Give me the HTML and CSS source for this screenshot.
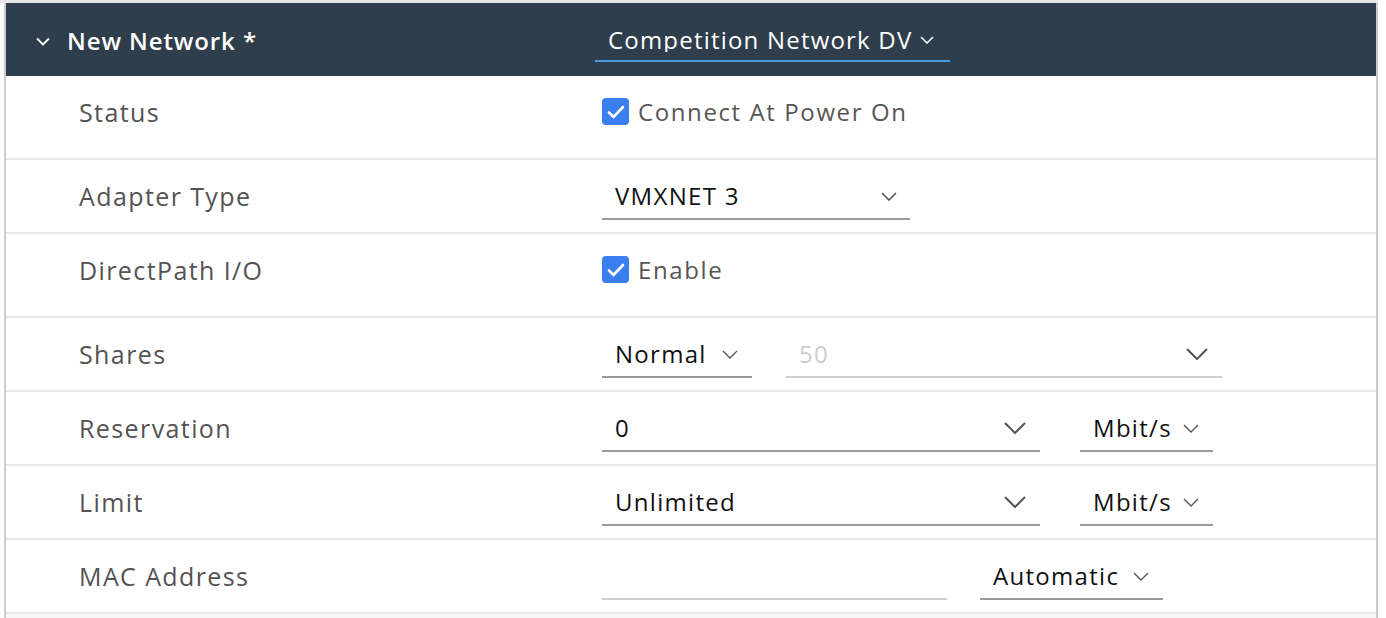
FILE: index.html
```html
<!DOCTYPE html>
<html>
<head>
<meta charset="utf-8">
<link rel="stylesheet" href="styles.css">
</head>
<body>
<div class="topband"></div>
<div class="panel">
  <div class="header">
    <div class="hlabel">
      <svg class="hchev" width="14" height="9" viewBox="0 0 14 9"><path d="M1 1.5 L7 7.5 L13 1.5" fill="none" stroke="#fff" stroke-width="1.8"/></svg>
      <span>New Network *</span>
    </div>
    <div class="hselect">
      <span class="htext">Competition Network DVS</span>
      <svg class="chev" width="14" height="8" viewBox="0 0 14 8"><path d="M1 1 L7 7 L13 1" fill="none" stroke="#fff" stroke-width="1.5"/></svg>
    </div>
  </div>

  <div class="row tall">
    <div class="label">Status</div>
    <div class="value">
      <label class="check"><span class="box"><svg width="18" height="14" viewBox="0 0 18 14"><path d="M2 7.5 L6.5 12 L16 2" fill="none" stroke="#fff" stroke-width="2.6" stroke-linecap="round" stroke-linejoin="round"/></svg></span><span class="ctext">Connect At Power On</span></label>
    </div>
  </div>

  <div class="row">
    <div class="label">Adapter Type</div>
    <div class="value">
      <div class="select w308"><span class="stext">VMXNET 3</span><svg class="chev" width="16" height="9" viewBox="0 0 16 9"><path d="M1 1 L8 8 L15 1" fill="none" stroke="#555" stroke-width="1.6"/></svg></div>
    </div>
  </div>

  <div class="row tall">
    <div class="label">DirectPath I/O</div>
    <div class="value">
      <label class="check"><span class="box"><svg width="18" height="14" viewBox="0 0 18 14"><path d="M2 7.5 L6.5 12 L16 2" fill="none" stroke="#fff" stroke-width="2.6" stroke-linecap="round" stroke-linejoin="round"/></svg></span><span class="ctext">Enable</span></label>
    </div>
  </div>

  <div class="row">
    <div class="label">Shares</div>
    <div class="value">
      <div class="select w150"><span class="stext">Normal</span><svg class="chev small" width="16" height="9" viewBox="0 0 16 9"><path d="M1 1 L8 8 L15 1" fill="none" stroke="#555" stroke-width="1.4"/></svg></div>
      <div class="select w436 disabled ml34"><span class="stext">50</span><svg class="chev big" width="22" height="12" viewBox="0 0 22 12"><path d="M1 1 L11 11 L21 1" fill="none" stroke="#555" stroke-width="2"/></svg></div>
    </div>
  </div>

  <div class="row">
    <div class="label">Reservation</div>
    <div class="value">
      <div class="select w438"><span class="stext">0</span><svg class="chev big" width="22" height="12" viewBox="0 0 22 12"><path d="M1 1 L11 11 L21 1" fill="none" stroke="#555" stroke-width="2"/></svg></div>
      <div class="select w133 ml40"><span class="stext">Mbit/s</span><svg class="chev small" width="16" height="9" viewBox="0 0 16 9"><path d="M1 1 L8 8 L15 1" fill="none" stroke="#555" stroke-width="1.4"/></svg></div>
    </div>
  </div>

  <div class="row">
    <div class="label">Limit</div>
    <div class="value">
      <div class="select w438"><span class="stext">Unlimited</span><svg class="chev big" width="22" height="12" viewBox="0 0 22 12"><path d="M1 1 L11 11 L21 1" fill="none" stroke="#555" stroke-width="2"/></svg></div>
      <div class="select w133 ml40"><span class="stext">Mbit/s</span><svg class="chev small" width="16" height="9" viewBox="0 0 16 9"><path d="M1 1 L8 8 L15 1" fill="none" stroke="#555" stroke-width="1.4"/></svg></div>
    </div>
  </div>

  <div class="row">
    <div class="label">MAC Address</div>
    <div class="value">
      <div class="select w345 disabled"><span class="stext"></span></div>
      <div class="select w183 ml33"><span class="stext">Automatic</span><svg class="chev small" width="16" height="9" viewBox="0 0 16 9"><path d="M1 1 L8 8 L15 1" fill="none" stroke="#555" stroke-width="1.4"/></svg></div>
    </div>
  </div>
  <div class="rest"></div>
</div>
</body>
</html>
```

FILE: styles.css
```css
html, body {
  margin: 0;
  padding: 0;
  background: #fff;
  font-family: "Open Sans", "Noto Sans", sans-serif;
}

.topband {
  height: 3px;
  width: 1378px;
  background: #e6e6e6;
}

.panel {
  margin-left: 4px;
  width: 1370px;
  border-left: 2px solid #cccccc;
  border-right: 2px solid #cccccc;
  background: #fff;
}

.header {
  height: 73px;
  background: #2f3e4c;
  display: flex;
  align-items: flex-start;
  color: #fff;
}

.hlabel {
  width: 589px;
  display: flex;
  align-items: center;
  padding-top: 25px;
  height: 24px;
  font-size: 24px;
  font-weight: 600;
  letter-spacing: 0.9px;
}

.hchev {
  margin-left: 30px;
  margin-right: 17px;
  margin-top: 2px;
}

.hselect {
  margin-top: 25px;
  width: 342px;
  padding-left: 13px;
  height: 24px;
  line-height: 24px;
  padding-bottom: 8px;
  border-bottom: 2px solid #4a9ad9;
  display: flex;
  align-items: center;
  font-size: 24px;
}

.htext {
  width: 304px;
  overflow: hidden;
  white-space: nowrap;
  letter-spacing: 1.2px;
}

.hselect .chev {
  margin-left: 8px;
}

.row {
  height: 72px;
  border-bottom: 2px solid #e8e8e8;
  display: flex;
  align-items: flex-start;
}

.row.tall {
  height: 82px;
}

.label {
  width: 523px;
  padding-left: 73px;
  margin-top: 24px;
  line-height: 24px;
  font-size: 25px;
  font-weight: 500;
  color: #535353;
  letter-spacing: 1.4px;
}

.value {
  display: flex;
  align-items: flex-start;
}

.check {
  display: flex;
  align-items: center;
  margin-top: 22px;
}

.box {
  width: 27px;
  height: 27px;
  border-radius: 4px;
  background: #3a7ef0;
  display: flex;
  align-items: center;
  justify-content: center;
}

.ctext {
  margin-left: 9px;
  line-height: 26px;
  font-size: 24px;
  color: #565656;
  letter-spacing: 1.6px;
}

.select {
  margin-top: 24px;
  height: 24px;
  line-height: 24px;
  padding-bottom: 10px;
  border-bottom: 2px solid #9a9a9a;
  display: flex;
  align-items: center;
  justify-content: space-between;
  box-sizing: content-box;
}

.select.disabled {
  border-bottom-color: #cfcfcf;
}

.stext {
  padding-left: 13px;
  font-size: 24px;
  color: #111;
  white-space: nowrap;
  letter-spacing: 1.3px;
}

.disabled .stext {
  color: #cccccc;
}

.chev {
  margin-right: 13px;
  flex: none;
}

.chev.small {
  margin-right: 14px;
}

.chev.big {
  margin-right: 14px;
}

.w308 { width: 308px; }
.w150 { width: 150px; }
.w436 { width: 436px; }
.w438 { width: 438px; }
.w133 { width: 133px; }
.w345 { width: 345px; }
.w183 { width: 183px; }
.ml34 { margin-left: 34px; }
.ml40 { margin-left: 40px; }
.ml33 { margin-left: 33px; }

.rest {
  height: 6px;
  background: #f7f7f7;
}
```
